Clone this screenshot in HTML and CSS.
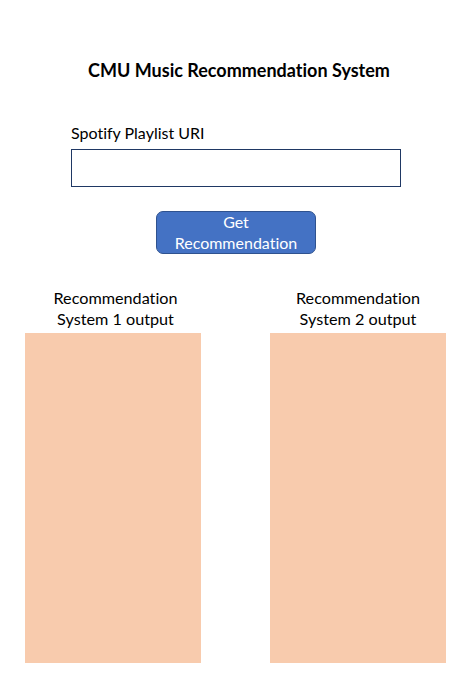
FILE: index.html
```html
<!DOCTYPE html>
<html>
<head>
<meta charset="utf-8">
<link rel="stylesheet" href="styles.css">
</head>
<body>
<main class="page">
  <h1 class="title">CMU Music Recommendation System</h1>
  <div class="field">
    <div class="label">Spotify Playlist URI</div>
    <div class="input"></div>
  </div>
  <div class="btn-row">
    <div class="btn">Get<br>Recommendation</div>
  </div>
  <div class="outputs">
    <section class="out">
      <div class="out-title out-title-shift">Recommendation<br>System 1 output</div>
      <div class="out-box"></div>
    </section>
    <section class="out">
      <div class="out-title">Recommendation<br>System 2 output</div>
      <div class="out-box"></div>
    </section>
  </div>
</main>
</body>
</html>
```
FILE: styles.css
```css
html, body {
  margin: 0;
  padding: 0;
  background: #ffffff;
}
body {
  font-family: Lato, "Liberation Sans", Arial, sans-serif;
  font-variant-ligatures: none;
  color: #000;
  width: 476px;
  height: 682px;
  overflow: hidden;
}
.page {
  display: flex;
  flex-direction: column;
}
.title {
  margin: 60px 0 0 0;
  padding-left: 2px;
  font-size: 18px;
  font-weight: bold;
  line-height: 20px;
  text-align: center;
}
.field {
  margin-top: 43px;
  padding-left: 71px;
  display: flex;
  flex-direction: column;
  gap: 6px;
}
.label {
  font-size: 16px;
  line-height: 20px;
}
.input {
  box-sizing: border-box;
  width: 330px;
  height: 38px;
  border: 1px solid #1f3864;
  background: #fff;
}
.btn-row {
  margin-top: 24px;
  padding-left: 156px;
  display: flex;
}
.btn {
  box-sizing: border-box;
  width: 160px;
  height: 43px;
  background: #4472c4;
  border: 1px solid #2f528f;
  border-radius: 7px;
  color: #fff;
  font-size: 16px;
  line-height: 20.5px;
  text-align: center;
}
.outputs {
  margin-top: 33px;
  padding-left: 25px;
  display: grid;
  grid-template-columns: 176px 176px;
  column-gap: 69px;
}
.out {
  display: flex;
  flex-direction: column;
  gap: 4px;
}
.out-title {
  font-size: 16.2px;
  line-height: 21px;
  text-align: center;
}
.out-title-shift {
  padding-left: 5px;
}
.out-box {
  height: 330px;
  background: #f8cbad;
}
```
